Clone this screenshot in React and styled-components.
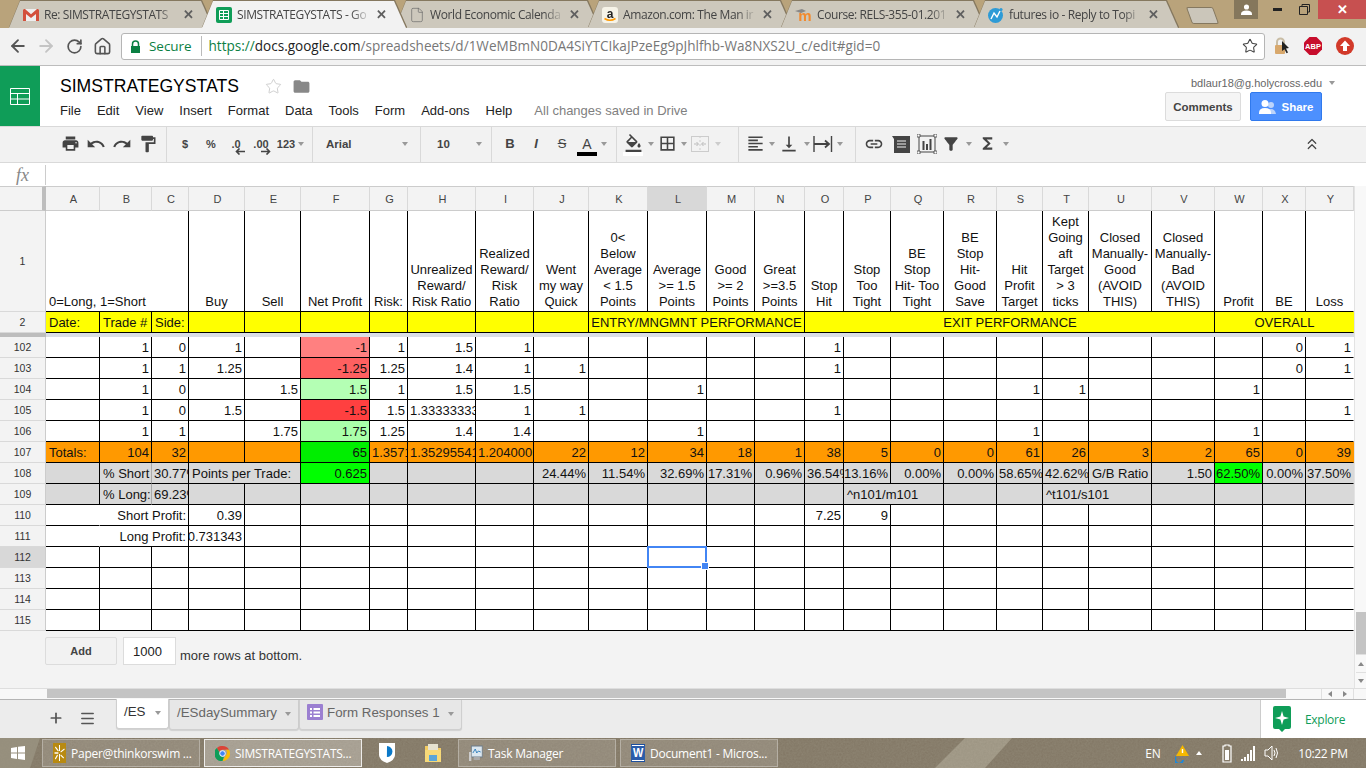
import React from 'react';
import styled, { createGlobalStyle } from 'styled-components';
import { ArrowLeft, ArrowRight, RotateCw, Home, Star, File, ChevronsUp, Plus, Menu } from 'lucide-react';
import { MdPrint, MdUndo, MdRedo, MdFormatPaint, MdFormatColorFill, MdBorderAll, MdFormatAlignLeft, MdVerticalAlignBottom, MdLink, MdFunctions, MdFilterAlt, MdFolder } from 'react-icons/md';

const Global = createGlobalStyle`
  html, body { margin: 0; padding: 0; background: #fff; overflow: hidden; }
  * { box-sizing: border-box; }
`;
const ARIAL = '"Liberation Sans", Arial, sans-serif';
const UI = '"Open Sans", "Noto Sans", sans-serif';

const Page = styled.div`
  width: 1366px; height: 768px; display: flex; flex-direction: column; overflow: hidden;
  font-family: ${ARIAL}; font-size: 13px; color: #000;
`;

/* browser tabs */
const TabStrip = styled.div`
  height: 28px; flex: none; background: #b9a37b; display: flex; align-items: flex-end; padding-left: 9px; position: relative;
`;
const Tab = styled.div`
  width: 204px; height: 27px; margin-right: -11px; position: relative; display: flex; align-items: center;
  padding: 0 19px 0 14px; gap: 5px; z-index: ${p => (p.$active ? 2 : 1)};
  filter: drop-shadow(0 -1px 0 #85785f) drop-shadow(1px 0 0 #85785f);
  &::before {
    content: ''; position: absolute; inset: 0; z-index: -1;
    background: ${p => (p.$active ? '#f2f2f2' : '#cdc8bc')};
    clip-path: polygon(0 100%, 11px 0, 192px 0, 204px 100%);
  }
`;
const TabTitle = styled.span`
  flex: 1; min-width: 0; white-space: nowrap; overflow: hidden; font: 12px ${UI}; color: #444;
  letter-spacing: -0.4px;
  -webkit-mask-image: linear-gradient(90deg, #000 85%, transparent);
  mask-image: linear-gradient(90deg, #000 85%, transparent);
`;
const TabClose = styled.span`
  font: bold 13px ${ARIAL}; color: #5f5f5f; flex: none;
`;
const NewTab = styled.div`
  width: 27px; height: 17px; margin: 0 0 4px 22px; background: #cbc6ba; border: 1px solid #85785f; transform: skewX(20deg); border-radius: 2px;
`;
const WinControls = styled.div`
  margin-left: auto; align-self: flex-start; display: flex; height: 19px; align-items: stretch;
`;
const ProfileBox = styled.div`
  width: 24px; background: #85775c; display: flex; align-items: center; justify-content: center;
`;
const WinBtn = styled.div`
  width: ${p => p.$w}px; padding-right: ${p => p.$pr || 0}px; background: ${p => p.$bg || 'transparent'}; color: #fff; display: flex; align-items: center; justify-content: center;
  font: bold 13px ${ARIAL};
`;

/* omnibox */
const OmniBar = styled.div`
  height: 38px; flex: none; background: #f2f2f2; border-bottom: 1px solid #bdbdbd; display: flex; align-items: center; padding: 0 2px 1px 4px;
`;
const NavBtn = styled.div`
  width: 28px; display: flex; justify-content: center; color: ${p => (p.$off ? '#c4c4c4' : '#555')};
`;
const Omnibox = styled.div`
  width: 1144px; height: 27px; margin-left: 5px; background: #fff; border: 1px solid #b5b5b5; border-radius: 3px;
  display: flex; align-items: center; padding-left: 8px; font: 14px ${UI}; white-space: nowrap;
`;
const SecureText = styled.span`
  color: #0b8043; margin-left: 8px; padding-right: 9px; border-right: 1px solid #bbb; line-height: 20px; font-size: 13.5px; letter-spacing: -0.05px;
`;
const Url = styled.span` margin-left: 7px; color: #777; font-size: 13.55px; `;
const UrlHi = styled.span` color: ${p => p.$c}; `;
const StarBox = styled.div` margin-left: auto; margin-right: 6px; color: #444; display: flex; `;
const ExtBtn = styled.div` width: 32px; display: flex; justify-content: center; `;

/* doc header */
const DocHeader = styled.div`
  height: 61px; flex: none; background: #fff; border-bottom: 1px solid #d9d9d9; display: flex;
`;
const Logo = styled.div`
  width: 40px; background: #0f9d58; display: flex; align-items: center; justify-content: center;
`;
const DocMain = styled.div`
  padding: 8px 0 0 20px; display: flex; flex-direction: column;
`;
const TitleRow = styled.div` display: flex; align-items: center; height: 24px; `;
const DocTitle = styled.span` font-size: 17.6px; color: #000; `;
const TitleStar = styled(Star)` margin-left: 26px; `;
const TitleFolder = styled(MdFolder)` margin-left: 10px; `;
const MenuRow = styled.div` display: flex; gap: 16px; margin-top: 3px; align-items: center; line-height: 20px; white-space: nowrap; `;
const MenuItem = styled.span` font-size: 13px; color: #222; `;
const SavedText = styled.span` color: #808080; margin-left: 6px; `;
const DocRight = styled.div`
  margin-left: auto; width: 201px; padding-top: 7px; display: flex; flex-direction: column;
`;
const Account = styled.div`
  font-size: 11px; color: #666; padding-left: 26px; height: 19px; display: flex; align-items: center; gap: 7px; white-space: nowrap;
`;
const ButtonRow = styled.div` display: flex; gap: 9px; `;
const CommentsBtn = styled.div`
  width: 76px; height: 29px; background: #f5f5f5; border: 1px solid #dcdcdc; border-radius: 2px; font: bold 11.5px ${ARIAL}; color: #444;
  display: flex; align-items: center; justify-content: center;
`;
const ShareBtn = styled.div`
  width: 72px; height: 29px; background: #4d90fe; border: 1px solid #3079ed; border-radius: 2px; color: #fff; font: bold 11.5px ${ARIAL};
  display: flex; align-items: center; justify-content: center; gap: 6px;
`;

/* sheets toolbar */
const Toolbar = styled.div`
  height: 36px; flex: none; background: #f2f2f2; border-bottom: 1px solid #d9d9d9; display: flex; align-items: stretch; padding-left: 57px; color: #444;
`;
const ToolGroup = styled.div`
  display: flex; align-items: center; width: ${p => p.$w}px; flex: none; padding-left: ${p => p.$pl || 0}px; padding-bottom: 2px;
  border-right: ${p => (p.$last ? 'none' : '1px solid #d9d9d9')};
`;
const Tool = styled.div`
  width: ${p => p.$w || 26}px; height: 24px; flex: none; display: flex; align-items: center; justify-content: center; position: relative;
  margin-left: ${p => p.$ml || 0}px;
  font: ${p => p.$font || 'bold 11px ' + ARIAL}; color: #444; text-decoration: ${p => p.$deco || 'none'};
`;
const Caret = styled.i`
  width: 0; height: 0; flex: none; display: block; border: 3px solid transparent; border-top: 4px solid ${p => p.$c || '#999'}; border-bottom: 0; margin-left: ${p => p.$ml || 0}px; margin-right: ${p => p.$mr || 0}px;
`;
const TabCaret = styled(Caret)` margin-left: auto; margin-right: 7px; margin-top: 4px; `;
const ColorBar = styled.i`
  position: absolute; left: ${p => p.$l}px; bottom: 0; width: 20px; height: 4px; background: ${p => p.$c};
`;
const TinyArrow = styled.svg` position: absolute; right: 3px; bottom: 1px; `;
const ToolSelect = styled.div`
  font-size: 11.5px; font-weight: bold; color: #444; flex: 1;
`;

/* formula bar */
const FormulaBar = styled.div`
  height: 23px; flex: none; background: #fff; display: flex; align-items: center;
`;
const Fx = styled.div`
  width: 46px; font: italic 18px "Liberation Serif", serif; color: #888; text-align: center; border-right: 1px solid #ccc; height: 20px; line-height: 20px;
`;

/* sheet */
const Workspace = styled.div` flex: none; height: 502px; display: flex; `;
const SheetColumn = styled.div` width: 1354px; flex: none; display: flex; flex-direction: column; `;
const COLW = [54,52,37,56,56,69,38,68,58,55,59,59,48,50,39,47,53,53,46,46,63,63,48,43,48];
const LETTERS = 'ABCDEFGHIJKLMNOPQRSTUVWXY'.split('');
const Row = styled.div`
  display: grid; height: ${p => p.$h}px; flex: none;
  grid-template-columns: 46px ${COLW.map(w => w + 'px').join(' ')};
  background: ${p => p.$bg || '#fff'};
`;
const Corner = styled.div`
  background: #f3f3f3; border-top: 1px solid #ccc; border-right: 4px solid #bdbdbd; border-bottom: 1px solid #ccc;
`;
const ColHead = styled.div`
  background: ${p => (p.$sel ? '#d8d8d8' : '#f3f3f3')}; border-top: 1px solid #ccc; border-right: 1px solid #d9d9d9; border-bottom: 1px solid #ccc;
  font-size: 11px; color: #444; display: flex; align-items: center; justify-content: center; padding-left: 2px;
`;
const RowHead = styled.div`
  background: ${p => (p.$sel ? '#d8d8d8' : '#f3f3f3')}; border-right: 1px solid #ccc; border-bottom: 1px solid #d9d9d9;
  font-size: 10.5px; color: #333; display: flex; align-items: center; justify-content: center;
`;
const Cell = styled.div`
  grid-column: span ${p => p.$span || 1};
  background: ${p => p.$bg || 'transparent'};
  border-bottom: 1px solid #000;
  border-right: 1px solid ${p => p.$rb || '#000'};
  padding: ${p => p.$pad || '1px 2px 0 3px'};
  display: flex; align-items: ${p => (p.$bottom ? 'flex-end' : 'center')};
  justify-content: ${p => p.$align || 'flex-end'};
  text-align: center; font-size: 13px; line-height: 16px; color: #111;
  white-space: ${p => (p.$wrap ? 'pre-line' : 'nowrap')}; overflow: ${p => (p.$spill ? 'visible' : 'hidden')}; position: relative;
`;
const Selection = styled.div`
  position: absolute; left: -1px; top: -1px; right: -1px; bottom: -1px; border: 2px solid #4285f4; z-index: 3;
  &::after { content: ''; position: absolute; right: -4px; bottom: -4px; width: 6px; height: 6px; background: #4285f4; border: 1px solid #fff; }
`;
const BandRow = styled.div` display: flex; height: 4px; flex: none; `;
const BandHead = styled.div` width: 46px; background: #bdbdbd; `;
const BandFill = styled.div` flex: 1; background: #dadee4; `;
const GridFooter = styled.div`
  height: 57px; flex: none; background: #f3f3f3; display: flex; align-items: flex-start; padding: 6px 0 0 45px;
`;
const AddBtn = styled.div`
  width: 72px; height: 28px; background: #f2f2f2; border: 1px solid #dcdcdc; border-radius: 2px; font: bold 11px ${ARIAL}; color: #444;
  display: flex; align-items: center; justify-content: center;
`;
const RowsInput = styled.div`
  width: 53px; height: 28px; margin-left: 6px; background: #fff; border: 1px solid #dcdcdc; font-size: 13px; color: #222; padding: 0 0 0 9px; display: flex; align-items: center;
`;
const FooterText = styled.div` margin: 11px 0 0 4px; font-size: 13px; color: #333; `;
const VScroll = styled.div`
  width: 12px; flex: none; background: #f8f8f8; border-left: 1px solid #e3e3e3; display: flex; flex-direction: column; padding-left: 1px;
`;
const VSpace = styled.div` flex: 1; `;
const VThumb = styled.div` height: 42px; background: #c4c4c4; flex: none; `;
const VArrow = styled.div`
  height: ${p => p.$h}px; flex: none; border-top: 1px solid #e0e0e0; display: flex; align-items: center; justify-content: center; background: #f8f8f8;
`;
const Tri = styled.i`
  width: 0; height: 0; display: block; border: 3px solid transparent;
  ${p => (p.$dir === 'up' ? `border-bottom: 4px solid ${p.$c || '#888'}; border-top: 0;` : '')}
  ${p => (p.$dir === 'down' ? 'border-top: 4px solid #888; border-bottom: 0;' : '')}
  ${p => (p.$dir === 'left' ? 'border-right: 4px solid #888; border-left: 0;' : '')}
  ${p => (p.$dir === 'right' ? 'border-left: 4px solid #888; border-right: 0;' : '')}
`;
const HScroll = styled.div`
  height: 11px; flex: none; background: #f8f8f8; border-top: 1px solid #dedede; display: flex; padding-left: 47px;
`;
const HThumb = styled.div` width: 1239px; background: #c4c4c4; height: 9px; `;
const HArrows = styled.div`
  margin-left: 35px; width: 33px; display: flex; border-left: 1px solid #e0e0e0; border-right: 1px solid #e0e0e0; align-items: center; justify-content: space-around;
`;

/* sheet tabs */
const SheetBar = styled.div`
  height: 39px; flex: none; background: #ececec; border-top: 1px solid #b5b5b5; display: flex; align-items: flex-start;
`;
const SheetTools = styled.div` width: 116px; padding: 10px 0 0 48px; display: flex; gap: 15px; color: #555; `;
const SheetTab = styled.div`
  height: 30px; width: ${p => p.$w}px; flex: none; background: ${p => (p.$active ? '#fff' : '#e7e7e7')}; color: ${p => (p.$active ? '#333' : '#666')};
  border: 1px solid #cfcfcf; border-top: none; border-radius: 0 0 3px 3px; box-shadow: 0 1px 1px rgba(0,0,0,.12);
  font-size: 13.33px; display: flex; align-items: center; padding: 0 0 5px 7px; gap: 4px; white-space: nowrap; margin-top: ${p => (p.$active ? '-1px' : '0')};
`;
const FormGlyph = styled.svg` flex: none; `;
const Explore = styled.div`
  margin-left: auto; width: 106px; height: 100%; background: #fff; border-left: 1px solid #ccc; display: flex; align-items: center; padding-left: 12px; gap: 14px;
  color: #0f9d58; font: 12px ${UI}; letter-spacing: -0.3px;
`;

/* taskbar */
const Taskbar = styled.div`
  height: 30px; flex: none; background: #837866; display: flex; align-items: center; position: relative; overflow: hidden; color: #fff; font: 12px ${UI};
`;
const Texture = styled.svg` position: absolute; left: 0; top: 0; z-index: 0; `;
const StartBtn = styled.div` width: 42px; display: flex; justify-content: center; padding-right: 6px; z-index: 1; `;
const TaskBtn = styled.div`
  width: 158px; height: 28px; margin-right: 4px; z-index: 1; flex: none; display: flex; align-items: center; gap: 5px; padding-left: 10px; white-space: nowrap; overflow: hidden;
  letter-spacing: -0.25px;
  background: rgba(255,255,255,${p => (p.$active ? 0.28 : 0.12)}); border: 1px solid rgba(255,255,255,${p => (p.$active ? 0.8 : 0.3)});
`;
const PinIcon = styled.div` width: ${p => p.$w}px; z-index: 1; flex: none; display: flex; justify-content: center; `;
const Tray = styled.div` margin-left: auto; z-index: 1; display: flex; align-items: center; padding-right: 18px; `;
const TrayItem = styled.div`
  width: ${p => p.$w}px; margin-left: ${p => p.$ml || 0}px; display: flex; justify-content: center; flex: none; white-space: nowrap; letter-spacing: ${p => p.$ls || 0}px;
`;

const GridIcon = ({ size = 16 }) => (
  <svg width={size} height={size} viewBox="0 0 16 16"><rect width="16" height="16" rx="2" fill="#0f9d58"/><path d="M3.5 3.5h9v9h-9zM3.5 6.5h9M3.5 9.5h9M7.5 3.5v9" fill="none" stroke="#fff"/></svg>
);
const Gmail = () => (<svg width="16" height="14" viewBox="0 0 16 14"><path d="M1 1h14v12H1z" fill="#eee"/><path d="M0 2l1-1h1l6 5.2L14 1h1l1 1v11h-3V6L8 10 3 6v7H0z" fill="#d3503c"/></svg>);
const Amazon = () => (<svg width="16" height="16" viewBox="0 0 16 16"><rect width="16" height="16" rx="3" fill="#f6f3e8"/><text x="8" y="10.5" fontFamily={ARIAL} fontWeight="bold" fontSize="12" textAnchor="middle" fill="#222">a</text><path d="M2.5 11.5q5.5 3.5 11 0" stroke="#f90" strokeWidth="1.6" fill="none"/></svg>);
const Moodle = () => (<svg width="17" height="16" viewBox="0 0 17 16"><path d="M0 4l7-2 4 2-5 2z" fill="#888"/><text x="10" y="14" fontFamily={ARIAL} fontWeight="bold" fontSize="15" textAnchor="middle" fill="#f28a2e">m</text></svg>);
const Futures = () => (<svg width="16" height="16" viewBox="0 0 16 16"><circle cx="7.5" cy="8.5" r="7.5" fill="#2e9bd6"/><path d="M3 12l3-6 3 4 3-6" stroke="#fff" strokeWidth="1.4" fill="none"/><circle cx="13" cy="2.5" r="1.6" fill="#2e9bd6"/></svg>);
const Person = ({ c = '#fff', s = 12 }) => (<svg width={s} height={s} viewBox="0 0 12 12"><circle cx="6" cy="3.3" r="2.8" fill={c}/><path d="M0 11q0-4 6-4t6 4v1H0z" fill={c}/></svg>);
const LockIcon = () => (<svg width="11" height="13" viewBox="0 0 11 13"><path d="M2.5 6V4a3 3 0 016 0v2" stroke="#0b8043" strokeWidth="1.5" fill="none"/><rect x="1" y="6" width="9" height="7" fill="#0b8043"/></svg>);
const PadExt = () => (<svg width="16" height="18" viewBox="0 0 16 18"><path d="M4 8V5a3.5 3.5 0 017 0v3" stroke="#c9bda5" strokeWidth="2" fill="none"/><rect x="2" y="8" width="10" height="9" rx="1" fill="#d8a86c"/><path d="M9 4l7 7-3 .5 2 4-1.5.8-2-4L9 14z" fill="#222"/></svg>);
const Abp = () => (<svg width="18" height="18" viewBox="0 0 18 18"><path d="M5.5 0h7L18 5.5v7L12.5 18h-7L0 12.5v-7z" fill="#c70d2c"/><text x="9" y="12" fontFamily={ARIAL} fontWeight="bold" fontSize="7.5" textAnchor="middle" fill="#fff">ABP</text></svg>);
const UpExt = () => (<svg width="18" height="18" viewBox="0 0 18 18"><circle cx="9" cy="9" r="9" fill="#d23a2a"/><path d="M9 3.5l5 5.5h-3v5H7V9H4z" fill="#fff"/></svg>);

const Note = () => (<svg width="18" height="18" viewBox="0 0 18 18"><path d="M0 1h18v17H2V4z" fill="#444"/><path d="M5 6h9M5 9h9M5 12h9" stroke="#f2f2f2" strokeWidth="1.2"/></svg>);
const ChartBox = () => (<svg width="20" height="20" viewBox="0 0 20 20"><rect x="2" y="2" width="16" height="16" fill="none" stroke="#444"/><path d="M5.5 7h2v9h-2zM9 10h2v6H9zM12.5 5h2v11h-2z" fill="#444"/><path d="M0 0h3v3H0zM17 0h3v3h-3zM0 17h3v3H0zM17 17h3v3h-3z" fill="#fff" stroke="#444" strokeWidth=".8"/></svg>);
const Merge = () => (<svg width="18" height="16" viewBox="0 0 18 16"><rect x=".5" y=".5" width="17" height="15" fill="none" stroke="#ccc"/><path d="M9 0v16" stroke="#ccc" strokeDasharray="2 2"/><path d="M3 8h4M5.5 6l2 2-2 2M15 8h-4M12.5 6l-2 2 2 2" fill="none" stroke="#bbb"/></svg>);
const WrapIco = () => (<svg width="20" height="18" viewBox="0 0 20 18"><path d="M1 1v16M18.5 1v16" stroke="#444" strokeWidth="1.4"/><path d="M1 9h15M12 5.5l4 3.5-4 3.5" stroke="#444" strokeWidth="1.8" fill="none"/></svg>);
const ExploreIcon = () => (<svg width="18" height="26" viewBox="0 0 18 26"><path d="M2 0h14a2 2 0 012 2v19a2 2 0 01-2 2h-4l-3 3-3-3H2a2 2 0 01-2-2V2a2 2 0 012-2z" fill="#0f9d58"/><path d="M9 5l1.6 5.4L16 12l-5.4 1.6L9 19l-1.6-5.4L2 12l5.4-1.6z" fill="#fff"/></svg>);
const MiniLeft = () => (<TinyArrow width="10" height="7" viewBox="0 0 10 7"><path d="M10 3.5H2M4.5.5l-3 3 3 3" stroke="#444" strokeWidth="1.6" fill="none"/></TinyArrow>);
const MiniRight = () => (<TinyArrow width="10" height="7" viewBox="0 0 10 7"><path d="M0 3.5h8M5.5.5l3 3-3 3" stroke="#444" strokeWidth="1.6" fill="none"/></TinyArrow>);
const Share2 = () => (<svg width="17" height="14" viewBox="0 0 17 14"><circle cx="12" cy="5" r="3" fill="#bcd4fb"/><path d="M8 14q0-5 4-5t5 5z" fill="#bcd4fb"/><circle cx="6" cy="3.5" r="3.5" fill="#fff"/><path d="M0 13q0-5 6-5t6 5v1H0z" fill="#fff"/></svg>);

const WinLogo = () => (<svg width="14" height="14" viewBox="0 0 14 14"><path d="M0 2l6-1v5.5H0zM7 .8L14 0v6.5H7zM0 7.5h6V13l-6-1zM7 7.5h7V14l-7-1z" fill="#fff"/></svg>);
const PaperIco = () => (<svg width="13" height="20" viewBox="0 0 17 20" preserveAspectRatio="none"><rect width="17" height="20" fill="#b88a12"/><path d="M8.5 2v6M8.5 11v7M2 10h5M10 9l5-3M10 12l4 3M3 4l4 4M6 12l-3 4" stroke="#fff" strokeWidth="1.3"/></svg>);
const ChromeIco = () => (<svg width="15" height="15" viewBox="0 0 16 16"><path d="M8 0a8 8 0 017 4H8a4 4 0 00-3.5 2L2 2a8 8 0 016-2z" fill="#db4437"/><path d="M15 4a8 8 0 01-7 12l3.5-6a4 4 0 000-6z" fill="#fbbc05"/><path d="M2 2l3.5 6a4 4 0 004 3.8L8 16A8 8 0 012 2z" fill="#0f9d58"/><circle cx="8" cy="8" r="3" fill="#4285f4" stroke="#fff"/></svg>);
const Shield = () => (<svg width="16" height="20" viewBox="0 0 16 20"><path d="M0 0h16v12q0 5-8 8-8-3-8-8z" fill="#fff"/><path d="M8 3a5.5 5.5 0 11-.1 11z" fill="#0a78c8"/></svg>);
const Folder = () => (<svg width="16" height="20" viewBox="0 0 16 20"><path d="M0 3h6l1 2h9v14H0z" fill="#f2cb62"/><rect x="3" y="1" width="10" height="6" fill="#e6e2d0"/><path d="M0 7h16v12H0z" fill="#f6d978"/><rect x="4" y="12" width="8" height="6" fill="#5aa5d8"/></svg>);
const TaskIco = () => (<svg width="14" height="18" viewBox="0 0 18 18" preserveAspectRatio="none"><rect x="3" y="2" width="14" height="11" fill="#dbe7f0" stroke="#6a7a88"/><path d="M5 9l3-4 2 4 2-2 3 1" stroke="#2a7ab8" fill="none"/><rect y="8" width="3" height="9" fill="#ccc"/><rect x="6" y="13" width="8" height="3" fill="#aaa"/></svg>);
const WordIco = () => (<svg width="14" height="18" viewBox="0 0 16 18" preserveAspectRatio="none"><rect x=".5" y=".5" width="15" height="17" fill="#fff" stroke="#1d4f9e"/><rect x="1" y="2" width="14" height="14" fill="#2a5caa"/><text x="8" y="13.5" fontFamily={ARIAL} fontWeight="bold" fontSize="12.5" textAnchor="middle" fill="#fff">W</text></svg>);
const Warn = () => (<svg width="15" height="20" viewBox="0 0 15 20"><path d="M7.5 2L14 13H1z" fill="#f5b800"/><path d="M7.5 6v4" stroke="#fff" strokeWidth="1.4"/><path d="M1 14a4 4 0 107 3" stroke="#1e88d8" strokeWidth="2" fill="none"/></svg>);
const Battery = () => (<svg width="10" height="19" viewBox="0 0 10 19"><path d="M3 1h4v1h2v16H1V2h2z" fill="none" stroke="#fff" strokeWidth="1.2"/><rect x="3" y="6" width="4" height="10" fill="#fff"/></svg>);
const Signal = () => (<svg width="15" height="15" viewBox="0 0 15 15"><path d="M0 13h2v2H0zM3 11h2v4H3zM6 8h2v7H6zM9 4h2v11H9zM12 0h2v15h-2z" fill="#fff"/></svg>);
const Speaker = () => (<svg width="15" height="16" viewBox="0 0 15 16"><path d="M1 5h3l4-4v14l-4-4H1z" fill="none" stroke="#fff"/><path d="M10 5q2 3 0 6M12 3q3 5 0 10" stroke="#fff" fill="none"/></svg>);

/* row data */
const hdr = (v) => ({ v, wrap: true, bottom: true, align: 'center', pad: '0 1px 1px' });
const left = (v, extra) => ({ v, align: 'flex-start', ...extra });
const clip = (v, extra) => ({ v, align: 'flex-start', pad: '1px 0 0 2px', ...extra });

const ROW1 = {
  A: { v: '0=Long, 1=Short', span: 3, bottom: true, align: 'flex-start', pad: '0 0 1px 3px' },
  D: hdr('Buy'), E: hdr('Sell'), F: hdr('Net Profit'), G: hdr('Risk:'),
  H: hdr('Unrealized\nReward/\nRisk Ratio'), I: hdr('Realized\nReward/\nRisk\nRatio'), J: hdr('Went\nmy way\nQuick'),
  K: hdr('0<\nBelow\nAverage\n< 1.5\nPoints'), L: hdr('Average\n>= 1.5\nPoints'), M: hdr('Good\n>= 2\nPoints'), N: hdr('Great\n>=3.5\nPoints'),
  O: hdr('Stop\nHit'), P: hdr('Stop\nToo\nTight'), Q: hdr('BE\nStop\nHit- Too\nTight'), R: hdr('BE\nStop\nHit-\nGood\nSave'),
  S: hdr('Hit\nProfit\nTarget'), T: hdr('Kept\nGoing\naft\nTarget\n> 3\nticks'), U: hdr('Closed\nManually-\nGood\n(AVOID\nTHIS)'), V: hdr('Closed\nManually-\nBad\n(AVOID\nTHIS)'),
  W: hdr('Profit'), X: hdr('BE'), Y: hdr('Loss'),
};
const ROW2 = {
  A: left('Date:'), B: left('Trade #'), C: left('Side:'), D: '', E: '', F: '', G: '', H: '', I: '', J: '',
  K: { v: 'ENTRY/MNGMNT PERFORMANCE', span: 4, align: 'center', pad: '1px 0 0' },
  O: { v: 'EXIT PERFORMANCE', span: 8, align: 'center' },
  W: { v: 'OVERALL', span: 3, align: 'center' },
};
const BODY = [
  { n: 102, c: { B: '1', C: '0', D: '1', F: { v: '-1', bg: '#ff8080' }, G: '1', H: '1.5', I: '1', O: '1', X: '0', Y: '1' } },
  { n: 103, c: { B: '1', C: '1', D: '1.25', F: { v: '-1.25', bg: '#ff6060' }, G: '1.25', H: '1.4', I: '1', J: '1', O: '1', X: '0', Y: '1' } },
  { n: 104, c: { B: '1', C: '0', E: '1.5', F: { v: '1.5', bg: '#b4ffb4' }, G: '1', H: '1.5', I: '1.5', L: '1', S: '1', T: '1', W: '1' } },
  { n: 105, c: { B: '1', C: '0', D: '1.5', F: { v: '-1.5', bg: '#ff4040' }, G: '1.5', H: clip('1.33333333'), I: '1', J: '1', O: '1', Y: '1' } },
  { n: 106, c: { B: '1', C: '1', E: '1.75', F: { v: '1.75', bg: '#aaffaa' }, G: '1.25', H: '1.4', I: '1.4', L: '1', S: '1', W: '1' } },
  { n: 107, bg: '#ff9900', c: { A: left('Totals:'), B: '104', C: '32', F: { v: '65', bg: '#00ee00' }, G: clip('1.3571'), H: clip('1.35295541'), I: clip('1.204000'), J: '22', K: '12', L: '34', M: '18', N: '1', O: '38', P: '5', Q: '0', R: '0', S: '61', T: '26', U: '3', V: '2', W: '65', X: '0', Y: '39' } },
  { n: 108, bg: '#d9d9d9', c: { B: left('% Short', { rb: '#aaa' }), C: clip('30.77%'), D: { v: 'Points per Trade:', span: 2, align: 'flex-start' }, F: { v: '0.625', bg: '#00ff00' }, J: '24.44%', K: '11.54%', L: '32.69%', M: '17.31%', N: '0.96%', O: clip('36.54%'), P: '13.16%', Q: '0.00%', R: '0.00%', S: clip('58.65%'), T: clip('42.62%'), U: left('G/B Ratio'), V: '1.50', W: { v: '62.50%', bg: '#00ff00', align: 'flex-start', pad: '1px 0 0 1px' }, X: '0.00%', Y: '37.50%' } },
  { n: 109, bg: '#d9d9d9', c: { B: left('% Long:', { rb: '#aaa' }), C: clip('69.23%'), P: { v: '^n101/m101', span: 2, align: 'flex-start' }, T: { v: '^t101/s101', span: 2, align: 'flex-start' } } },
  { n: 110, c: { A: { v: '', rb: 'transparent' }, B: { v: 'Short Profit:', span: 2 }, D: '0.39', O: '7.25', P: '9' } },
  { n: 111, c: { A: { v: '', rb: 'transparent' }, B: { v: 'Long Profit:', span: 2 }, D: { v: '0.731343', pad: '1px 2px 0 0' } } },
  { n: 112, sel: true, c: { L: { v: '', selected: true } } },
  { n: 113, c: {} }, { n: 114, c: {} }, { n: 115, c: {} },
];

function renderCells(map) {
  const out = [];
  for (let i = 0; i < LETTERS.length; i++) {
    const L = LETTERS[i];
    const raw = map[L];
    const c = raw && typeof raw === 'object' ? raw : { v: raw || '' };
    const last = i + (c.span || 1) - 1 === LETTERS.length - 1;
    out.push(
      <Cell key={L} $span={c.span} $bg={c.bg} $align={c.align} $bottom={c.bottom} $wrap={c.wrap} $pad={c.pad} $rb={last ? 'transparent' : c.rb}
        $spill={c.selected}>
        {c.v}
        {c.selected && <Selection />}
      </Cell>
    );
    if (c.span) i += c.span - 1;
  }
  return out;
}

const TABS = [
  { t: 'Re: SIMSTRATEGYSTATS', i: <Gmail /> },
  { t: 'SIMSTRATEGYSTATS - Go', i: <GridIcon />, active: true },
  { t: 'World Economic Calenda', i: <File size={16} strokeWidth={1} color="#666" /> },
  { t: 'Amazon.com: The Man ir', i: <Amazon /> },
  { t: 'Course: RELS-355-01.201', i: <Moodle /> },
  { t: 'futures io - Reply to Topi', i: <Futures /> },
];
const MENUS = ['File', 'Edit', 'View', 'Insert', 'Format', 'Data', 'Tools', 'Form', 'Add-ons', 'Help'];

export default function App() {
  return (
    <Page>
      <Global />
      <TabStrip>
        {TABS.map(t => (
          <Tab key={t.t} $active={t.active}>
            {t.i}
            <TabTitle>{t.t}</TabTitle>
            <TabClose>✕</TabClose>
          </Tab>
        ))}
        <NewTab />
        <WinControls>
          <ProfileBox><Person s={11} /></ProfileBox>
          <WinBtn $w={38}><svg width="9" height="3"><rect width="9" height="3" fill="#222"/></svg></WinBtn>
          <WinBtn $w={22} $pr={6}><svg width="11" height="11" viewBox="0 0 11 11"><path d="M3 2V.5h7.5V8H9M.5 2.5h8v8h-8z" fill="none" stroke="#222"/></svg></WinBtn>
          <WinBtn $w={48} $bg="#c75050">✕</WinBtn>
        </WinControls>
      </TabStrip>

      <OmniBar>
        <NavBtn><ArrowLeft size={20} strokeWidth={2.2} /></NavBtn>
        <NavBtn $off><ArrowRight size={20} strokeWidth={2.2} /></NavBtn>
        <NavBtn><RotateCw size={17} strokeWidth={2.4} /></NavBtn>
        <NavBtn><Home size={19} strokeWidth={2} /></NavBtn>
        <Omnibox>
          <LockIcon />
          <SecureText>Secure</SecureText>
          <Url><UrlHi $c="#0b8043">https://</UrlHi><UrlHi $c="#222">docs.google.com</UrlHi>/spreadsheets/d/1WeMBmN0DA4SiYTCIkaJPzeEg9pJhlfhb-Wa8NXS2U_c/edit#gid=0</Url>
          <StarBox><Star size={16} strokeWidth={1.6} /></StarBox>
        </Omnibox>
        <ExtBtn><PadExt /></ExtBtn>
        <ExtBtn><Abp /></ExtBtn>
        <ExtBtn><UpExt /></ExtBtn>
      </OmniBar>

      <DocHeader>
        <Logo>
          <svg width="20" height="17" viewBox="0 0 20 17"><path d="M.5.5h19v16H.5zM.5 5.5h19M.5 11h19M7.5 5.5V16.5" fill="none" stroke="#fff"/></svg>
        </Logo>
        <DocMain>
          <TitleRow>
            <DocTitle>SIMSTRATEGYSTATS</DocTitle>
            <TitleStar size={17} strokeWidth={1} color="#bbb" />
            <TitleFolder size={19} color="#888" />
          </TitleRow>
          <MenuRow>
            {MENUS.map(m => <MenuItem key={m}>{m}</MenuItem>)}
            <SavedText>All changes saved in Drive</SavedText>
          </MenuRow>
        </DocMain>
        <DocRight>
          <Account>bdlaur18@g.holycross.edu<Caret /></Account>
          <ButtonRow>
            <CommentsBtn>Comments</CommentsBtn>
            <ShareBtn><Share2 />Share</ShareBtn>
          </ButtonRow>
        </DocRight>
      </DocHeader>

      <Toolbar>
        <ToolGroup $w={110}>
          <Tool><MdPrint size={19} /></Tool>
          <Tool><MdUndo size={20} /></Tool>
          <Tool><MdRedo size={20} /></Tool>
          <Tool><MdFormatPaint size={20} /></Tool>
        </ToolGroup>
        <ToolGroup $w={146} $pl={5}>
          <Tool>$</Tool>
          <Tool>%</Tool>
          <Tool $w={24}>.0<MiniLeft /></Tool>
          <Tool $w={26}>.00<MiniRight /></Tool>
          <Tool $w={24}>123</Tool><Caret />
        </ToolGroup>
        <ToolGroup $w={108} $pl={13}>
          <ToolSelect>Arial</ToolSelect><Caret $mr={12} />
        </ToolGroup>
        <ToolGroup $w={71} $pl={16}>
          <ToolSelect>10</ToolSelect><Caret $mr={9} />
        </ToolGroup>
        <ToolGroup $w={125} $pl={5}>
          <Tool $font={'bold 13px ' + ARIAL}>B</Tool>
          <Tool $font={'italic bold 13px ' + ARIAL}>I</Tool>
          <Tool $font={'13px ' + ARIAL} $deco="line-through">S</Tool>
          <Tool $w={24} $font={'14px ' + ARIAL}>A<ColorBar $c="#000" $l={2} /></Tool><Caret $ml={2} />
        </ToolGroup>
        <ToolGroup $w={122} $pl={5}>
          <Tool $w={22}><MdFormatColorFill size={19} /><ColorBar $c="#fff" $l={1} /></Tool><Caret $ml={4} />
          <Tool $w={26}><MdBorderAll size={19} /></Tool><Caret $ml={1} />
          <Tool $w={26}><Merge /></Tool><Caret $ml={2} $c="#ccc" />
        </ToolGroup>
        <ToolGroup $w={117} $pl={6}>
          <Tool $w={20}><MdFormatAlignLeft size={19} /></Tool><Caret $ml={4} />
          <Tool $w={28}><MdVerticalAlignBottom size={20} /></Tool><Caret $ml={1} />
          <Tool $w={26}><WrapIco /></Tool><Caret $ml={1} />
        </ToolGroup>
        <ToolGroup $w={460} $pl={5} $last>
          <Tool><MdLink size={20} /></Tool>
          <Tool $w={27}><Note /></Tool>
          <Tool $w={25}><ChartBox /></Tool>
          <Tool $w={24}><MdFilterAlt size={20} /></Tool><Caret $ml={3} />
          <Tool $w={30}><MdFunctions size={19} /></Tool><Caret $ml={1} />
          <Tool $w={26} $ml={290}><ChevronsUp size={18} strokeWidth={1.6} /></Tool>
        </ToolGroup>
      </Toolbar>

      <FormulaBar><Fx>fx</Fx></FormulaBar>

      <Workspace>
        <SheetColumn>
          <Row $h={25}>
            <Corner />
            {LETTERS.map(l => <ColHead key={l} $sel={l === 'L'}>{l}</ColHead>)}
          </Row>
          <Row $h={101}><RowHead>1</RowHead>{renderCells(ROW1)}</Row>
          <Row $h={21} $bg="#ffff00"><RowHead>2</RowHead>{renderCells(ROW2)}</Row>
          <BandRow><BandHead /><BandFill /></BandRow>
          {BODY.map(r => (
            <Row key={r.n} $h={21} $bg={r.bg}>
              <RowHead $sel={r.sel}>{r.n}</RowHead>
              {renderCells(r.c)}
            </Row>
          ))}
          <GridFooter>
            <AddBtn>Add</AddBtn>
            <RowsInput>1000</RowsInput>
            <FooterText>more rows at bottom.</FooterText>
          </GridFooter>
        </SheetColumn>
        <VScroll>
          <VSpace />
          <VThumb />
          <VArrow $h={18}><Tri $dir="up" /></VArrow>
          <VArrow $h={16}><Tri $dir="down" /></VArrow>
        </VScroll>
      </Workspace>

      <HScroll>
        <HThumb />
        <HArrows><Tri $dir="left" /><Tri $dir="right" /></HArrows>
      </HScroll>

      <SheetBar>
        <SheetTools><Plus size={16} strokeWidth={2.6} /><Menu size={17} strokeWidth={2.2} /></SheetTools>
        <SheetTab $active $w={53}>/ES<TabCaret /></SheetTab>
        <SheetTab $w={130}>/ESdaySummary<TabCaret /></SheetTab>
        <SheetTab $w={163}>
          <FormGlyph width="16" height="16" viewBox="0 0 16 16"><rect width="16" height="16" rx="1" fill="#9b7fd1"/><path d="M3 4h2v2H3zM3 7.5h2v2H3zM3 11h2v2H3zM6.5 4H13v2H6.5zM6.5 7.5H13v2H6.5zM6.5 11H13v2H6.5z" fill="#fff"/></FormGlyph>
          Form Responses 1<TabCaret />
        </SheetTab>
        <Explore><ExploreIcon />Explore</Explore>
      </SheetBar>

      <Taskbar>
        <Texture width="1366" height="30">
          <filter id="n"><feTurbulence type="fractalNoise" baseFrequency="0.55" numOctaves="3" /><feColorMatrix values="0 0 0 0 0.3  0 0 0 0 0.27  0 0 0 0 0.2  0.5 0.5 0 0 -0.25" /></filter>
          <polygon points="965,0 1012,0 985,30 935,30" fill="#a59d8b" />
          <polygon points="0,0 40,0 30,30 0,30" fill="#97907e" />
          <rect width="1366" height="30" filter="url(#n)" />
        </Texture>
        <StartBtn><WinLogo /></StartBtn>
        <TaskBtn><PaperIco />Paper@thinkorswim ...</TaskBtn>
        <TaskBtn $active><ChromeIco />SIMSTRATEGYSTATS...</TaskBtn>
        <PinIcon $w={42}><Shield /></PinIcon>
        <PinIcon $w={50}><Folder /></PinIcon>
        <TaskBtn><TaskIco />Task Manager</TaskBtn>
        <TaskBtn><WordIco />Document1 - Micros...</TaskBtn>
        <Tray>
          <TrayItem $w={20}>EN</TrayItem>
          <TrayItem $w={22} $ml={8}><Warn /></TrayItem>
          <TrayItem $w={12}><Tri $dir="up" $c="#fff" /></TrayItem>
          <TrayItem $w={24} $ml={10}><Battery /></TrayItem>
          <TrayItem $w={18}><Signal /></TrayItem>
          <TrayItem $w={28}><Speaker /></TrayItem>
          <TrayItem $w={50} $ml={13} $ls={-0.3}>10:22 PM</TrayItem>
        </Tray>
      </Taskbar>
    </Page>
  );
}
